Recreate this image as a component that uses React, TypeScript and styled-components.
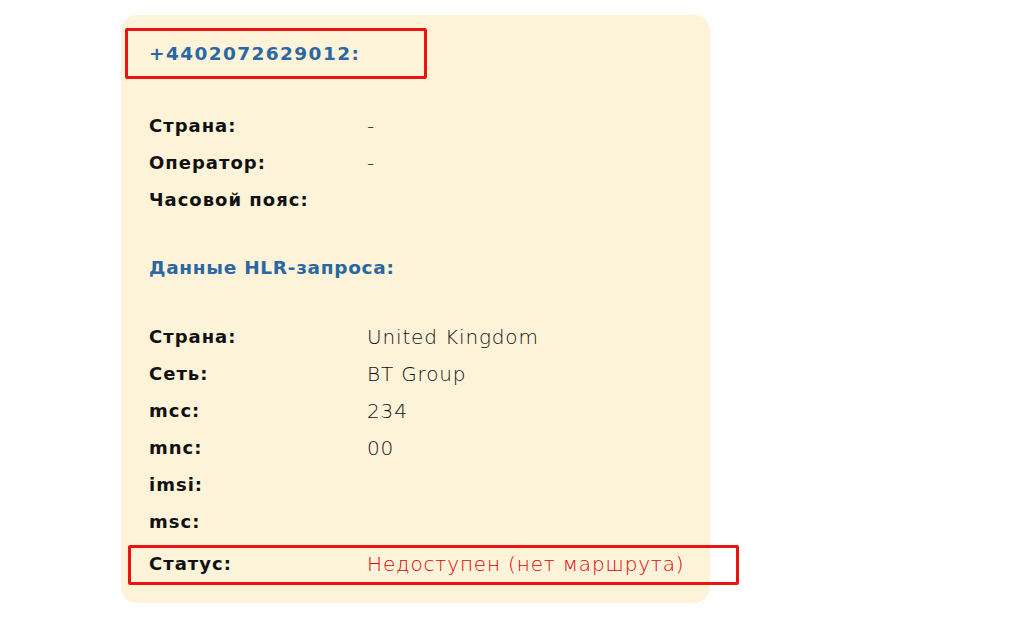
import React from "react";
import styled, { createGlobalStyle } from "styled-components";

const Global = createGlobalStyle`
  html, body { margin: 0; padding: 0; background: #ffffff; }
  body { font-family: "DejaVu Sans", "Noto Sans", sans-serif; }
`;

const Page = styled.div`
  width: 1019px;
  height: 618px;
  padding: 15px 0 0 121px;
  box-sizing: border-box;
`;

const Card = styled.div`
  width: 589px;
  height: 588px;
  box-sizing: border-box;
  background: #fdf3d9;
  border-radius: 16px;
  padding: 20px 0 0 28px;
  display: flex;
  flex-direction: column;
`;

const Title = styled.div<{ $gap: number; $spacing: number }>`
  position: relative;
  height: 37px;
  line-height: 37px;
  font-size: 18.5px;
  font-weight: 700;
  letter-spacing: ${(p) => p.$spacing}px;
  color: #2a67a3;
  margin-bottom: ${(p) => p.$gap}px;
`;

const Rows = styled.div<{ $gap: number }>`
  display: grid;
  grid-template-columns: 218px 1fr;
  grid-auto-rows: 37px;
  align-items: center;
  margin-bottom: ${(p) => p.$gap}px;
`;

const Label = styled.div`
  font-size: 18px;
  font-weight: 700;
  letter-spacing: 1px;
  color: #111111;
`;

const Value = styled.div<{ $red?: boolean }>`
  font-size: 20px;
  font-weight: 200;
  letter-spacing: 0.85px;
  color: ${(p) => (p.$red ? "#e40000" : "#111111")};
`;

const StatusRow = styled(Rows)`
  position: relative;
`;

const Marker = styled.div<{ $l: number; $t: number; $w: number; $h: number }>`
  position: absolute;
  left: ${(p) => p.$l}px;
  top: ${(p) => p.$t}px;
  width: ${(p) => p.$w}px;
  height: ${(p) => p.$h}px;
  box-sizing: border-box;
  border: 3px solid #ee1111;
  border-radius: 2px;
  pointer-events: none;
`;

type Row = [string, string];

const first: Row[] = [
  ["Страна:", "-"],
  ["Оператор:", "-"],
  ["Часовой пояс:", ""],
];

const hlr: Row[] = [
  ["Страна:", "United Kingdom"],
  ["Сеть:", "BT Group"],
  ["mcc:", "234"],
  ["mnc:", "00"],
  ["imsi:", ""],
  ["msc:", ""],
];

export default function App() {
  return (
    <Page>
      <Global />
      <Card>
        <Title $gap={35} $spacing={1.4}>
          +4402072629012:
          <Marker $l={-24} $t={-7.5} $w={302} $h={51} />
        </Title>
        <Rows $gap={31}>
          {first.map(([l, v]) => (
            <React.Fragment key={l}>
              <Label>{l}</Label>
              <Value>{v}</Value>
            </React.Fragment>
          ))}
        </Rows>
        <Title $gap={32} $spacing={0.7}>
          Данные HLR-запроса:
        </Title>
        <Rows $gap={5}>
          {hlr.map(([l, v]) => (
            <React.Fragment key={l}>
              <Label>{l}</Label>
              <Value>{v}</Value>
            </React.Fragment>
          ))}
        </Rows>
        <StatusRow $gap={0}>
          <Label>Статус:</Label>
          <Value $red>Недоступен (нет маршрута)</Value>
          <Marker $l={-21} $t={-0.5} $w={611} $h={40} />
        </StatusRow>
      </Card>
    </Page>
  );
}
